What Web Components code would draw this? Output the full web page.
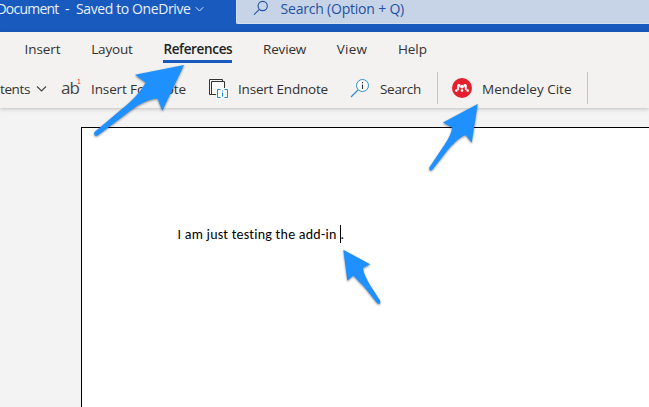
<!DOCTYPE html>
<html lang="en">
<head>
<meta charset="utf-8">
<title>Document</title>
<style>
body{margin:0;width:649px;height:407px;overflow:hidden;background:#f3f3f3}
</style>
</head>
<body>
<word-app></word-app>
<script>
// Text run spaced to occupy an exact width.
class UiLabel extends HTMLElement{
  connectedCallback(){
    const r=this.attachShadow({mode:'open'});
    r.innerHTML=`<style>:host{display:block;flex:none;white-space:pre;line-height:20px;height:20px}span{display:inline-block}</style><span></span>`;
    const s=r.querySelector('span'),t=this.getAttribute('text'),w=+this.getAttribute('w');
    s.textContent=t;
    this.style.width=w+'px';
    const n=s.getBoundingClientRect().width;
    s.style.letterSpacing=((w-n)/t.length)+'px';
  }
}
customElements.define('ui-label',UiLabel);

class TitleBar extends HTMLElement{
  constructor(){super();this.attachShadow({mode:'open'}).innerHTML=`
  <style>
  :host{display:flex;height:32px;background:#185abd;color:#e9f0fa;font:14px "Open Sans","Noto Sans",sans-serif}
  .doc{width:236px;display:flex;flex:none;box-sizing:border-box;overflow:hidden}
  .doc ui-label{margin-top:-1px}
  .doc ui-label:first-child{margin-left:-3.500px}
  .dash{margin-left:6.5px}.saved{margin-left:7px}
  .doc svg{margin:6px 0 0 4px}
  .search{flex:1;height:24px;box-sizing:border-box;background:#c7d4e7;border-bottom:1px solid #d5e0ef;border-left:1px solid #d5e0ef;border-bottom-left-radius:2px;display:flex;color:#1f51a0}
  .search svg{margin:0 0 0 16px;flex:none}
  .search ui-label{margin:-1px 0 0 10.500px}
  </style>
  <div class="doc"><ui-label text="Document" w="62"></ui-label><ui-label class="dash" text="-" w="4"></ui-label><ui-label class="saved" text="Saved to OneDrive" w="114.500"></ui-label>
  <svg width="9" height="7" viewBox="0 0 9 7"><path d="M.7 1.2 4.5 5 8.3 1.2" fill="none" stroke="#dce7f6"/></svg></div>
  <div class="search"><svg width="17" height="17" viewBox="0 0 17 17"><g fill="none" stroke="#1f51a0" stroke-width="1.1"><circle cx="9.7" cy="6" r="4.6"/><path d="M6.4 9.3 1 14.7"/></g></svg><ui-label text="Search (Option + Q)" w="123.500"></ui-label></div>`}
}
customElements.define('title-bar',TitleBar);

class TabItem extends HTMLElement{
  connectedCallback(){this.attachShadow({mode:'open'}).innerHTML=`
  <style>:host{display:block;flex:none;height:24px;border-bottom:3px solid transparent;box-sizing:border-box}
  :host([active]){border-color:#185abd;font-weight:600;color:#222}</style>
  <ui-label text="${this.getAttribute('text')}" w="${this.getAttribute('w')}"></ui-label>`}
}
customElements.define('tab-item',TabItem);

class RibbonTabs extends HTMLElement{
  constructor(){super();this.attachShadow({mode:'open'}).innerHTML=`
  <style>:host{display:flex;box-sizing:border-box;height:36px;padding:7px 0 0 24.5px;gap:30.700px;color:#323130;font:13.5px "Open Sans","Noto Sans",sans-serif}
  </style><slot></slot>`}
}
customElements.define('ribbon-tabs',RibbonTabs);

class RibbonTools extends HTMLElement{
  constructor(){super();this.attachShadow({mode:'open'}).innerHTML=`
  <style>
  :host{display:flex;height:40px;box-sizing:border-box;color:#323130;font:13.5px "Open Sans","Noto Sans",sans-serif}
  ui-label{margin-top:11px}
  svg{flex:none;display:block}
  i{width:1px;height:32px;margin-top:4px;background:#c6c5c4;flex:none}
  .ab{display:flex;width:20px;margin-left:14px;color:#444;font-size:17px;font-family:"Open Sans",sans-serif}
  .ab ui-label{margin-top:10px}
  .ab b{font:7px/8px "Liberation Sans",sans-serif;color:#ff1515;margin:10px 0 0 -2px}
  </style>
  <ui-label text="tents" w="30"></ui-label>
  <svg style="margin:17px 0 0 6px" width="11" height="8" viewBox="0 0 11 8"><path d="M1 1.5 5.5 6 10 1.5" fill="none" stroke="#444" stroke-width="1.1"/></svg>
  <div class="ab"><ui-label text="ab" w="18"></ui-label><b>1</b></div>
  <ui-label style="margin-left:10px" text="Insert Footnote" w="95"></ui-label>
  <svg style="margin:11px 0 0 23px" width="20" height="21" viewBox="0 0 20 21"><g fill="none" stroke="#333"><path d="M5 15.5H.5V.5h13V3"/><path d="M7 15.5H2.5V2.5h13V9" fill="#fafafa"/></g><path d="M7 9h13V20H7z" fill="#f8f8f8"/><g fill="none" stroke="#168bd0"><path d="M11.5 10.5h-3v8h3M15.500 10.5h3v8h-3"/><path d="M13.500 13.500v4M13.500 11.500v1"/></g></svg>
  <ui-label style="margin-left:9px" text="Insert Endnote" w="90"></ui-label>
  <svg style="margin:10px 0 0 22px" width="20" height="20" viewBox="0 0 20 20"><circle cx="12.500" cy="7.500" r="6" fill="#fafafa" stroke="#2f8fca"/><path d="M8 12 1 19" stroke="#2f8fca" stroke-width="1.200"/><path d="M12.500 6.500v4.500M12.500 4v1.200" stroke="#333" stroke-width="1.100"/></svg>
  <ui-label style="margin-left:10px" text="Search" w="41"></ui-label>
  <i style="margin-left:16px"></i>
  <svg style="margin:10px 0 0 14px" width="20" height="20" viewBox="0 0 20 20"><circle cx="10" cy="10" r="10" fill="#e4202f"/><g fill="#fff"><circle cx="10" cy="8.600" r="1.900"/><circle cx="4.300" cy="12.600" r="1.300"/><circle cx="10" cy="12.600" r="1.300"/><circle cx="15.700" cy="12.600" r="1.300"/><path d="M5.100 7.700C5.300 5.800 7.700 5.500 8.600 6.900L7.300 9.200 6.900 12.300 5.400 12C5 10.800 5.400 9.600 5.100 7.700ZM14.900 7.700C14.700 5.800 12.300 5.500 11.400 6.900L12.700 9.200 13.100 12.300 14.600 12C15 10.800 14.600 9.600 14.900 7.700Z"/></g></svg>
  <ui-label style="margin-left:10px" text="Mendeley Cite" w="89.500"></ui-label>
  <i style="margin-left:15.500px"></i>`}
}
customElements.define('ribbon-tools',RibbonTools);

class DocPage extends HTMLElement{
  constructor(){super();this.attachShadow({mode:'open'}).innerHTML=`
  <style>:host{display:flex;box-sizing:border-box;flex:1;margin:19px 0 0 81px;border:solid #000;border-width:1px 0 0 1px;background:#fff;padding:97px 0 0 95.500px;color:#000;font:14px Carlito,Lato,sans-serif}
  i{width:1px;height:18px;background:#000;margin:0 0 0 3px}</style>
  <ui-label text="I am just testing the add-in" w="159"></ui-label><i></i><ui-label text="." w="3"></ui-label>`}
}
customElements.define('doc-page',DocPage);

// Annotation arrows floating above the document.
class PointerArrows extends HTMLElement{
  constructor(){super();this.attachShadow({mode:'open'}).innerHTML=`
  <style>:host{position:absolute;left:0;top:0;width:649px;height:407px}svg{display:block;filter:drop-shadow(0 1px 1px rgba(0,0,0,.45))}</style>
  <svg width="649" height="407" fill="#1e90ff">
  <path d="M184 65 135 74.700 145.700 82.700C140 92 133 100 123 108L94.500 132Q93.500 136 96 136L98 135.300 126.700 113.500C137 105 147 99.500 157.500 98.500L162.300 110.700Z"/>
  <path d="M477.700 104 443 122.500 452.300 127.700C451 134 449 138 445 144L429.300 167.500Q429 171 431 170.500L432.500 169.500 446.500 151.500C452 145 458 138 465.500 135L471.700 142.700Z"/>
  <path d="M343.300 249.700 370.200 264.300 363 268C363.500 273 366 278 370 285L380.300 301Q380.500 304.500 379 304L377 303 366.700 290C362 284 357 280 353.300 275.500L347.300 280.700Z"/>
  </svg>`}
}
customElements.define('pointer-arrows',PointerArrows);

class WordApp extends HTMLElement{
  constructor(){super();this.attachShadow({mode:'open'}).innerHTML=`
  <style>:host{display:flex;flex-direction:column;position:relative;width:649px;height:407px;overflow:hidden;background:#f3f3f3}
  .ribbon{height:76px;flex:none;background:#f3f2f1;box-shadow:0 1px 4px rgba(0,0,0,.22)}</style>
  <title-bar></title-bar>
  <div class="ribbon"><ribbon-tabs><tab-item text="Insert" w="36"></tab-item><tab-item text="Layout" w="41.500"></tab-item><tab-item text="References" w="69" active></tab-item><tab-item text="Review" w="43"></tab-item><tab-item text="View" w="30.500"></tab-item><tab-item text="Help" w="29"></tab-item></ribbon-tabs><ribbon-tools></ribbon-tools></div>
  <doc-page></doc-page><pointer-arrows></pointer-arrows>`}
}
customElements.define('word-app',WordApp);
</script>
</body>
</html>
